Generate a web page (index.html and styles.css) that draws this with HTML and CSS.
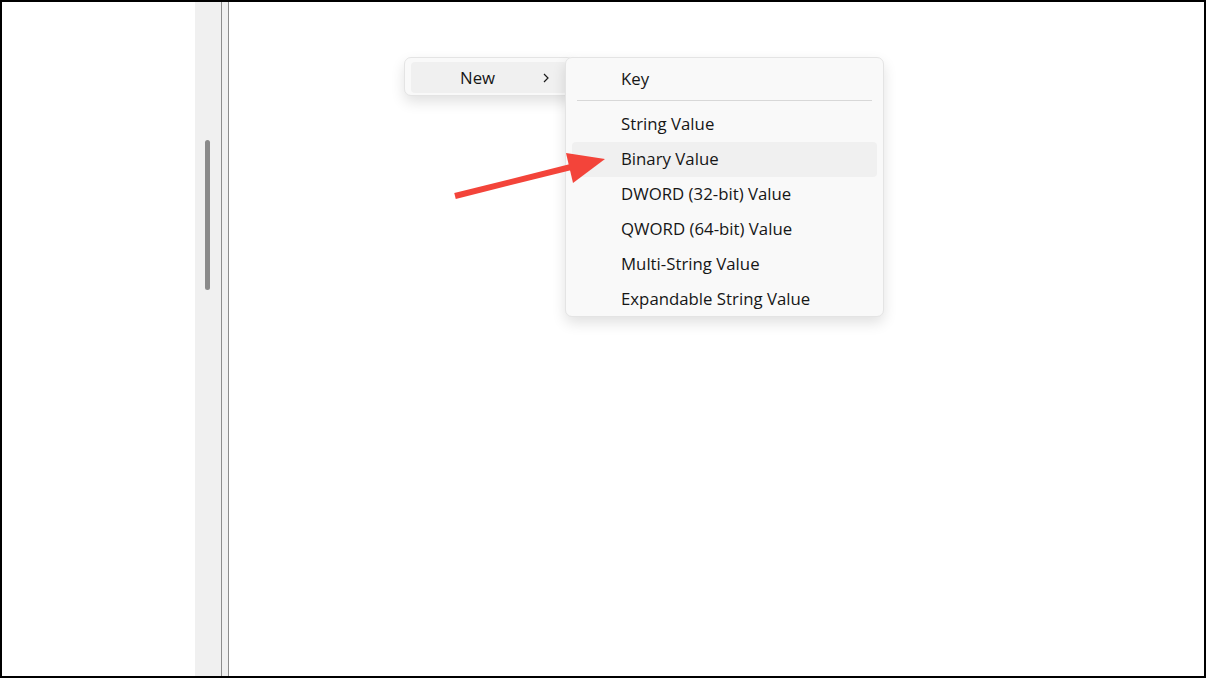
FILE: index.html
```html
<!DOCTYPE html>
<html lang="en">
<head>
    <meta charset="UTF-8">
    <meta name="viewport" content="width=device-width, initial-scale=1.0">
    <title>Registry Editor - New</title>
    <link rel="stylesheet" href="styles.css">
</head>
<body>
    <div class="screen">
        <div class="blank"></div>
        <div class="tree-pane">
            <div class="scroll-thumb"></div>
        </div>
        <div class="splitter"></div>
        <div class="values-pane">
            <div class="menu menu-main">
                <div class="item active">
                    <span class="label">New</span>
                    <svg class="chevron" width="10" height="12" viewBox="0 0 10 12">
                        <path d="M3 2 L7 6 L3 10" fill="none" stroke="#1a1a1a" stroke-width="1.2"/>
                    </svg>
                </div>
            </div>
            <div class="menu menu-sub">
                <div class="item">Key</div>
                <div class="separator"></div>
                <div class="item">String Value</div>
                <div class="item active">Binary Value</div>
                <div class="item">DWORD (32-bit) Value</div>
                <div class="item">QWORD (64-bit) Value</div>
                <div class="item">Multi-String Value</div>
                <div class="item">Expandable String Value</div>
            </div>
            <svg class="pointer" width="170" height="60" viewBox="0 0 170 60">
                <line x1="6" y1="51" x2="122" y2="22" stroke="#f3443a" stroke-width="6"/>
                <polygon points="156,14 117,8 124,38" fill="#f3443a"/>
            </svg>
        </div>
    </div>
</body>
</html>
```

FILE: styles.css
```css
html, body {
    margin: 0;
    padding: 0;
}
body {
    background-color: #fff;
    font-family: "Open Sans", "Noto Sans", sans-serif;
}
.screen {
    width: 1206px;
    height: 678px;
    box-sizing: border-box;
    border: 2px solid #000;
    display: flex;
    overflow: hidden;
}
.blank {
    width: 193px;
    background-color: #fff;
}
.tree-pane {
    width: 26px;
    background-color: #f0f0f0;
    padding-top: 138px;
    box-sizing: border-box;
}
.scroll-thumb {
    width: 5px;
    height: 150px;
    margin-left: 10px;
    border-radius: 3px;
    background-color: #8a8a8a;
}
.splitter {
    width: 6px;
    background-color: #f0f0f0;
    border-left: 1px solid #8c8c8c;
    border-right: 1px solid #8c8c8c;
}
.values-pane {
    flex: 1;
    position: relative;
    background-color: #fff;
}
.menu {
    position: absolute;
    background-color: #f9f9f9;
    border: 1px solid #e4e4e4;
    border-radius: 7px;
    box-shadow: 0 6px 14px rgba(0, 0, 0, 0.12);
    box-sizing: border-box;
}
.menu-main {
    left: 175px;
    top: 55px;
    width: 170px;
    height: 39px;
    padding: 4px 6px;
}
.menu-sub {
    left: 336px;
    top: 55px;
    width: 319px;
    height: 260px;
    padding: 4px 6px;
}
.item {
    height: 35px;
    line-height: 34px;
    padding-left: 49px;
    font-size: 16.8px;
    color: #161616;
    border-radius: 4px;
}
.item.active {
    background-color: #f0f0f0;
}
.menu-main .item {
    height: 31px;
    line-height: 31px;
    display: flex;
    align-items: center;
    justify-content: space-between;
    padding-right: 16px;
}
.separator {
    height: 1px;
    margin: 3px 5px 6px;
    background-color: #d8d8d8;
}
.pointer {
    position: absolute;
    left: 220px;
    top: 143px;
}
```
